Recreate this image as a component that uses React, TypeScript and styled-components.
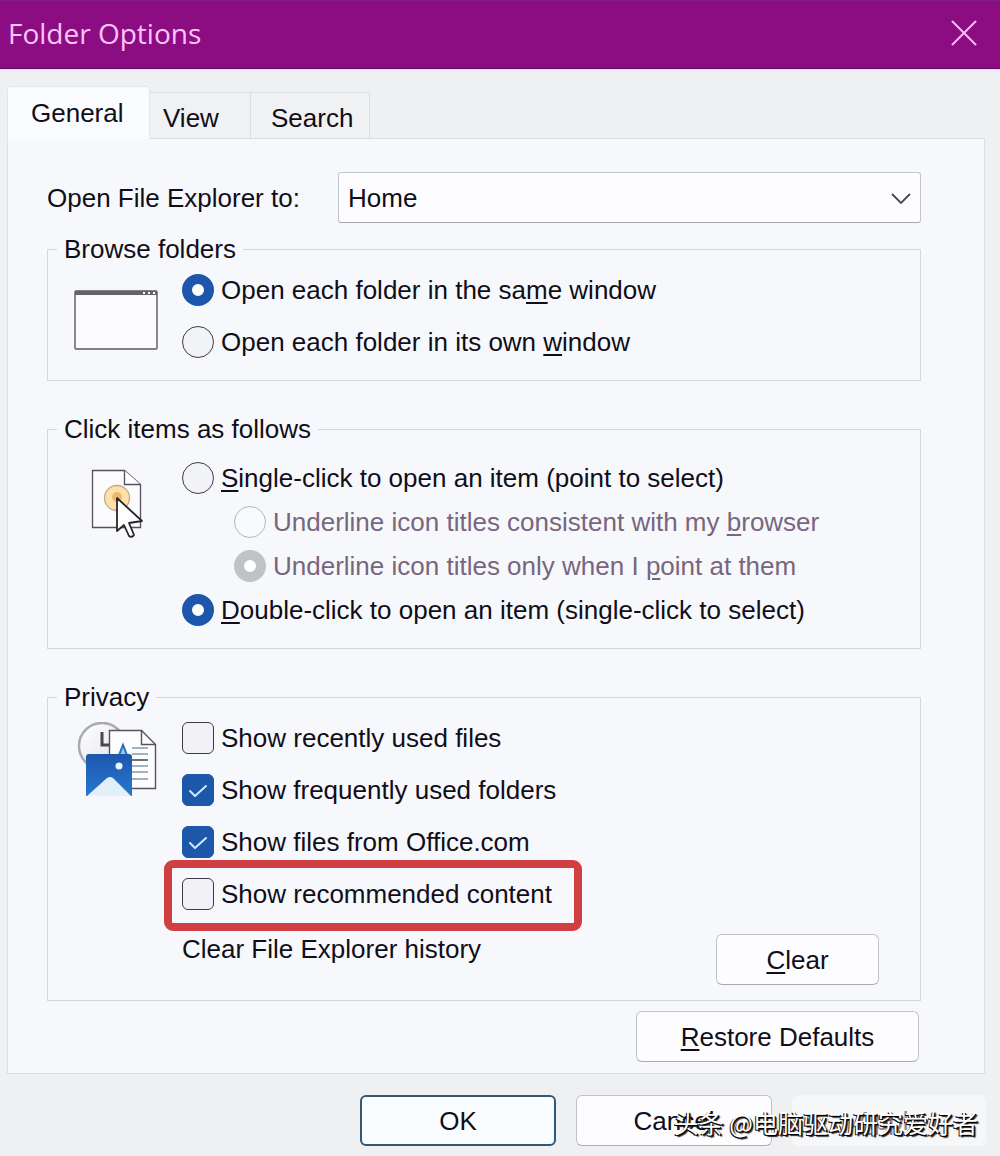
import React, { useState } from "react";
import styled, { createGlobalStyle, css } from "styled-components";

const GlobalStyle = createGlobalStyle`
  *, *::before, *::after { box-sizing: border-box; }
  body { margin: 0; background: #eef0f3; }
  button, input, select { font: inherit; color: inherit; margin: 0; }
`;

const ink = "#100e18";
const blue = "#1c57ab";

const Dialog = styled.main`
  position: relative;
  min-height: 100vh;
  background: #eef0f2;
  color: ${ink};
  font-family: "Liberation Sans", Arial, sans-serif;
  font-size: 26px;
  line-height: 30px;
`;

const TitleBar = styled.header`
  display: flex;
  align-items: center;
  justify-content: space-between;
  height: 69px;
  padding: 0 20px 4px 8px;
  background: #8c0c82;
  border-top: 1px solid #7d1f80;
  border-bottom: 1px solid #5e0a5c;
  box-shadow: 0 1px 3px #f3d3f7;
`;

const Title = styled.h1`
  margin: 0;
  color: #fbc4fb;
  font-family: "Open Sans", "Noto Sans", sans-serif;
  font-size: 28px;
  font-weight: 500;
  line-height: 40px;
`;

const CloseButton = styled.button`
  display: grid;
  place-items: center;
  width: 32px;
  height: 32px;
  padding: 0;
  border: 0;
  background: none;
  color: #fbb8fa;
`;

const Body = styled.div`
  padding: 17px 15px 0 7px;
`;

const Tabs = styled.div`
  display: flex;
  align-items: flex-end;
`;

const Tab = styled.button<{ $selected?: boolean; $width: number; $start: number }>`
  width: ${(p) => p.$width}px;
  height: 46px;
  padding: 4px 0 0 ${(p) => p.$start}px;
  border: 1px solid #dadee1;
  border-left-width: 0;
  border-bottom: 0;
  background: #f0f1f3;
  text-align: left;
  ${(p) =>
    p.$selected &&
    css`
      position: relative;
      height: 53px;
      margin-bottom: -1px;
      padding-top: 0;
      border: 1px solid #e4e7ea;
      border-bottom: 0;
      border-radius: 4px 4px 0 0;
      background: #fafbfe;
    `}
`;

const Panel = styled.section`
  padding: 33px 63px 11px 39px;
  border: 1px solid #dadfe2;
  background: #f7f8fc;
`;

const OpenToRow = styled.div`
  display: grid;
  grid-template-columns: 291px 1fr;
  align-items: center;
  margin-bottom: 11px;
`;

const SelectBox = styled.div`
  position: relative;
  select {
    display: block;
    width: 100%;
    height: 51px;
    padding: 0 48px 0 9px;
    border: 1px solid #c3c7cd;
    border-bottom-color: #a4a8af;
    border-radius: 3px;
    background: #fdfdff;
    appearance: none;
  }
  svg {
    position: absolute;
    right: 10px;
    top: 17px;
    pointer-events: none;
  }
`;

const Group = styled.fieldset<{ $top?: number; $bottom: number; $after: number }>`
  display: grid;
  grid-template-columns: 134px 1fr;
  min-width: 0;
  margin: 0 0 ${(p) => p.$after}px;
  padding: ${(p) => p.$top ?? 0}px 0 ${(p) => p.$bottom}px;
  border: 1px solid #d3d8dd;
`;

const Legend = styled.legend`
  margin-left: 9px;
  padding: 0 7px;
`;

const Art = styled.div<{ $left: number; $top: number }>`
  padding: ${(p) => p.$top}px 0 0 ${(p) => p.$left}px;
  svg { display: block; }
`;

const Options = styled.div`
  display: flex;
  flex-direction: column;
  align-items: flex-start;
`;

const Option = styled.label<{ $height: number; $nested?: boolean; $dim?: boolean; $marked?: boolean }>`
  position: relative;
  display: flex;
  align-items: center;
  gap: 7px;
  height: ${(p) => p.$height}px;
  margin-left: ${(p) => (p.$nested ? 52 : 0)}px;
  color: ${(p) => (p.$dim ? "#78667f" : ink)};
  white-space: nowrap;
  ${(p) =>
    p.$marked &&
    css`
      &::after {
        content: "";
        position: absolute;
        inset: -8px -30px -11px -18px;
        border: 8px solid #d04043;
        border-radius: 9px;
        pointer-events: none;
      }
    `}
`;

const Radio = styled.input`
  flex: none;
  width: 32px;
  height: 32px;
  border: 1px solid #3f3b46;
  border-radius: 50%;
  background: #f2f3f6;
  appearance: none;
  &:checked { border: 10px solid ${blue}; background: #fff; }
  &:disabled { border-color: #b4b6b9; background: #f9fafc; }
  &:disabled:checked { border-color: #bfc2c6; background: #fff; }
`;

const CheckWrap = styled.span`
  position: relative;
  display: block;
  width: 32px;
  height: 32px;
  input {
    display: block;
    width: 32px;
    height: 32px;
    border: 1px solid #3f3b46;
    border-radius: 6px;
    background: #f2f2f6;
    appearance: none;
  }
  input:checked { border-color: ${blue}; background: ${blue}; }
  svg { position: absolute; inset: 0; pointer-events: none; }
`;

const Key = styled.span`
  text-decoration: underline;
  text-decoration-thickness: 2px;
  text-underline-offset: 3px;
`;

const HistoryRow = styled.div`
  grid-column: 2;
  display: flex;
  align-items: flex-start;
  justify-content: space-between;
  padding: 14px 41px 0 0;
`;

const PushButton = styled.button<{ $width: number; $primary?: boolean }>`
  width: ${(p) => p.$width}px;
  height: 51px;
  padding: 0;
  border: 1px solid #bfc3c8;
  border-bottom-color: #a9adb3;
  border-radius: 6px;
  background: #fdfdff;
  ${(p) =>
    p.$primary &&
    css`
      border: 2px solid #2f5878;
      background: #f9fdff;
    `}
  &:disabled {
    border-color: #f6f7f9;
    background: #f6f7f9;
    color: #8d8593;
  }
`;

const RestoreRow = styled.div`
  display: flex;
  justify-content: flex-end;
  padding-right: 2px;
`;

const Footer = styled.footer`
  display: flex;
  justify-content: flex-end;
  gap: 20px;
  padding: 21px 14px 10px;
`;

const Watermark = styled.div`
  position: absolute;
  right: 22px;
  bottom: 16px;
  color: #fff;
  font-family: "Noto Sans CJK SC", sans-serif;
  font-size: 25px;
  line-height: 36px;
  text-shadow: 1px 1px 0 #000, -1px 1px 0 #111, 2px 2px 1px #222;
  white-space: nowrap;
  pointer-events: none;
`;

const WindowArt = () => (
  <svg width="84" height="60" viewBox="0 0 84 60" aria-hidden="true">
    <rect x="1" y="1" width="82" height="58" rx="1" fill="#fbfbfe" stroke="#5b595f" strokeWidth="1.4" />
    <path d="M1 1h82v4H1z" fill="#626465" />
    <path d="M69 3h2M74 3h2M79 3h2" stroke="#fff" strokeWidth="2" />
  </svg>
);

const ClickArt = () => (
  <svg width="54" height="72" viewBox="0 0 54 72" aria-hidden="true">
    <path d="M1.500 1.500h32l16 14v43h-48z" fill="#fbfafc" stroke="#55505b" strokeWidth="1.300" />
    <path d="M33.500 1.500v14h16" fill="#fff" stroke="#55505b" strokeWidth="1.300" />
    <circle cx="26" cy="29" r="12.500" fill="#fde1a8" stroke="#c4a988" strokeWidth="1.300" />
    <circle cx="26" cy="28" r="5" fill="#dfa040" opacity=".6" />
    <path d="M26 29v33l7-6 5 11q3 2 5-1l-5-12 13-2z" fill="#fff" stroke="#29242d" strokeWidth="1.800" strokeLinejoin="round" />
  </svg>
);

const PrivacyArt = () => (
  <svg width="80" height="76" viewBox="0 0 80 76" aria-hidden="true">
    <defs>
      <linearGradient id="photo" x1="0" y1="0" x2="0" y2="1">
        <stop offset="0" stopColor="#1e56ac" />
        <stop offset="1" stopColor="#2779d0" />
      </linearGradient>
      <linearGradient id="clock" x1="0" y1="0" x2="1" y2="1">
        <stop offset="0" stopColor="#fff" />
        <stop offset="1" stopColor="#dfe1e5" />
      </linearGradient>
    </defs>
    <circle cx="25" cy="24" r="23" fill="url(#clock)" stroke="#a8abae" strokeWidth="2.500" />
    <path d="M25 10v13h8" fill="none" stroke="#4b454c" strokeWidth="3" />
    <path d="M32.500 8.500h32l14 14v44h-46z" fill="#fdfdff" stroke="#57515a" strokeWidth="1.400" />
    <path d="M64.500 8.500v14h14" fill="none" stroke="#57515a" strokeWidth="1.400" />
    <path d="M42 33l4-10 4 10" fill="#8ec5ed" stroke="#2c6db7" strokeWidth="2" />
    <path d="M55 26h16M55 32h16M55 44h16M55 50h16M55 57h16" stroke="#7f9cb3" strokeWidth="1.300" />
    <path d="M55 38h16" stroke="#3b454f" strokeWidth="1.500" />
    <path d="M12 32h40q3 0 3 3v39H9V35q0-3 3-3z" fill="url(#photo)" />
    <path d="M10 74l20-18q3-2 6 0l18 18z" fill="#e3eff9" />
    <circle cx="42" cy="44" r="3.500" fill="#e9f7ff" />
  </svg>
);

function CheckOption(props: { label: string; initial: boolean; marked?: boolean }) {
  const [on, setOn] = useState(props.initial);
  return (
    <Option $height={52} $marked={props.marked}>
      <CheckWrap>
        <input type="checkbox" checked={on} onChange={(e) => setOn(e.target.checked)} />
        {on && (
          <svg width="32" height="32" viewBox="0 0 32 32" aria-hidden="true">
            <path d="M8 17l5 5L24 12" fill="none" stroke="#cdeaff" strokeWidth="2" strokeLinecap="round" strokeLinejoin="round" />
          </svg>
        )}
      </CheckWrap>
      <span>{props.label}</span>
    </Option>
  );
}

export default function App() {
  const [browse, setBrowse] = useState("same");
  const [click, setClick] = useState("double");

  return (
    <Dialog>
      <GlobalStyle />
      <TitleBar>
        <Title>Folder Options</Title>
        <CloseButton aria-label="Close">
          <svg width="26" height="26" viewBox="0 0 26 26" aria-hidden="true">
            <path d="M1.500 1.500l23 23M24.500 1.500l-23 23" stroke="currentColor" strokeWidth="2" strokeLinecap="round" />
          </svg>
        </CloseButton>
      </TitleBar>
      <Body>
        <Tabs role="tablist">
          <Tab role="tab" aria-selected="true" $selected $width={143} $start={23}>General</Tab>
          <Tab role="tab" aria-selected="false" $width={101} $start={13}>View</Tab>
          <Tab role="tab" aria-selected="false" $width={119} $start={20}>Search</Tab>
        </Tabs>
        <Panel role="tabpanel" aria-label="General">
          <OpenToRow>
            <label htmlFor="open-to">Open File Explorer to:</label>
            <SelectBox>
              <select id="open-to" defaultValue="home">
                <option value="home">Home</option>
                <option value="pc">This PC</option>
              </select>
              <svg width="20" height="20" viewBox="0 0 20 20" fill="none" aria-hidden="true">
                <path d="M1 5l9 9 9-9" stroke="#4a4650" strokeWidth="1.800" />
              </svg>
            </SelectBox>
          </OpenToRow>

          <Group $bottom={12} $after={33}>
            <Legend>Browse folders</Legend>
            <Art $left={26} $top={26}><WindowArt /></Art>
            <Options>
              <Option $height={52}>
                <Radio type="radio" name="browse" checked={browse === "same"} onChange={() => setBrowse("same")} />
                <span>Open each folder in the sa<Key>m</Key>e window</span>
              </Option>
              <Option $height={52}>
                <Radio type="radio" name="browse" checked={browse === "own"} onChange={() => setBrowse("own")} />
                <span>Open each folder in its own <Key>w</Key>indow</span>
              </Option>
            </Options>
          </Group>

          <Group $top={12} $bottom={16} $after={33}>
            <Legend>Click items as follows</Legend>
            <Art $left={43} $top={13}><ClickArt /></Art>
            <Options>
              <Option $height={44}>
                <Radio type="radio" name="click" checked={click === "single"} onChange={() => setClick("single")} />
                <span><Key>S</Key>ingle-click to open an item (point to select)</span>
              </Option>
              <Option $height={44} $nested $dim>
                <Radio type="radio" name="underline" disabled />
                <span>Underline icon titles consistent with my <Key>b</Key>rowser</span>
              </Option>
              <Option $height={44} $nested $dim>
                <Radio type="radio" name="underline" disabled defaultChecked />
                <span>Underline icon titles only when I <Key>p</Key>oint at them</span>
              </Option>
              <Option $height={44}>
                <Radio type="radio" name="click" checked={click === "double"} onChange={() => setClick("double")} />
                <span><Key>D</Key>ouble-click to open an item (single-click to select)</span>
              </Option>
            </Options>
          </Group>

          <Group $bottom={15} $after={10}>
            <Legend>Privacy</Legend>
            <Art $left={29} $top={10}><PrivacyArt /></Art>
            <Options>
              <CheckOption label="Show recently used files" initial={false} />
              <CheckOption label="Show frequently used folders" initial />
              <CheckOption label="Show files from Office.com" initial />
              <CheckOption label="Show recommended content" initial={false} marked />
            </Options>
            <HistoryRow>
              <span>Clear File Explorer history</span>
              <PushButton $width={163}><Key>C</Key>lear</PushButton>
            </HistoryRow>
          </Group>

          <RestoreRow>
            <PushButton $width={283}><Key>R</Key>estore Defaults</PushButton>
          </RestoreRow>
        </Panel>
      </Body>
      <Footer>
        <PushButton $width={196} $primary>OK</PushButton>
        <PushButton $width={196}>Cancel</PushButton>
        <PushButton $width={194} disabled><Key>A</Key>pply</PushButton>
      </Footer>
      <Watermark>头条 @电脑驱动研究爱好者</Watermark>
    </Dialog>
  );
}
